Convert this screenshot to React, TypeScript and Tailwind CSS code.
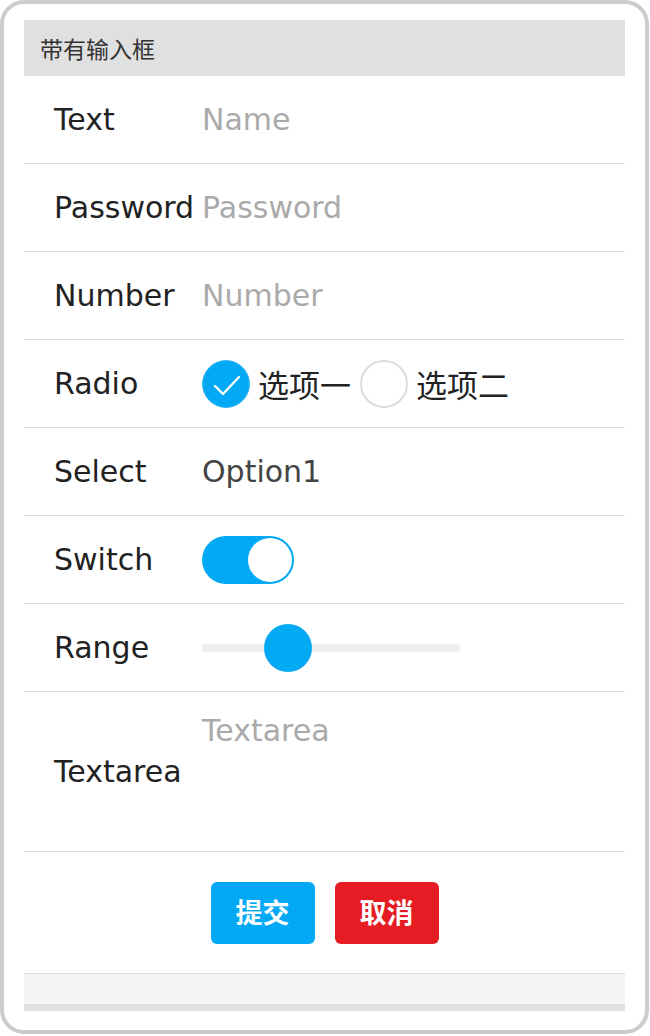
import React from "react";

const latin = "font-['DejaVu_Sans','Noto_Sans_CJK_SC',sans-serif]";

function Row({ label, children, tall }: { label: string; children: React.ReactNode; tall?: boolean }) {
  return (
    <div className={`flex items-center border-b border-[#dddddd] ${tall ? "h-[160px]" : "h-[88px]"}`}>
      <div className="w-[178px] shrink-0 pl-[30px] text-[30px] leading-none text-[#222222] whitespace-nowrap">{label}</div>
      <div className="flex-1 min-w-0 self-stretch flex items-center">{children}</div>
    </div>
  );
}

export default function App() {
  return (
    <div className={`w-[649px] h-[1034px] border-4 border-[#cccccc] rounded-[24px] bg-white pt-4 px-5 ${latin}`}>
      <div className="h-[56px] bg-[#e0e0e0] flex items-center pl-[16px] text-[23px] text-[#333333] font-['Noto_Sans_CJK_SC',sans-serif]">
        带有输入框
      </div>
      <Row label="Text">
        <span className="text-[30px] leading-none text-[#aaaaaa]">Name</span>
      </Row>
      <Row label="Password">
        <span className="text-[30px] leading-none text-[#aaaaaa]">Password</span>
      </Row>
      <Row label="Number">
        <span className="text-[30px] leading-none text-[#aaaaaa]">Number</span>
      </Row>
      <Row label="Radio">
        <div className="flex items-center">
          <div className="w-[48px] h-[48px] rounded-full bg-[#03a9f4] border border-[#3fb9f3] flex items-center justify-center">
            <svg width="46" height="46" viewBox="0 0 46 46" fill="none">
              <path d="M12 25 L20 33 L36 16" stroke="white" strokeWidth="2.4" strokeLinecap="round" strokeLinejoin="round" />
            </svg>
          </div>
          <span className="ml-[8px] text-[31px] leading-none text-[#222222] font-['Noto_Sans_CJK_SC',sans-serif]">选项一</span>
          <div className="ml-[9px] w-[48px] h-[48px] rounded-full border-2 border-[#dddddd] bg-white" />
          <span className="ml-[8px] text-[31px] leading-none text-[#222222] font-['Noto_Sans_CJK_SC',sans-serif]">选项二</span>
        </div>
      </Row>
      <Row label="Select">
        <span className="text-[30px] leading-none text-[#444444]">Option1</span>
      </Row>
      <Row label="Switch">
        <div className="w-[92px] h-[48px] rounded-full bg-[#03a9f4] flex items-center justify-end pr-[2px]">
          <div className="w-[44px] h-[44px] rounded-full bg-white" />
        </div>
      </Row>
      <Row label="Range">
        <div className="relative w-[258px] h-[8px] rounded-full bg-[#efefef]">
          <div className="absolute left-[62px] top-[-20px] w-[48px] h-[48px] rounded-full bg-[#03a9f4]" />
        </div>
      </Row>
      <Row label="Textarea" tall>
        <div className="self-stretch pt-[21px]">
          <span className="text-[30px] leading-[1.2] text-[#aaaaaa]">Textarea</span>
        </div>
      </Row>
      <div className="h-[121px] flex items-center justify-center gap-[20px] font-['Noto_Sans_CJK_SC',sans-serif]">
        <button className="w-[104px] h-[62px] rounded-[6px] bg-[#03a9f4] text-white text-[27px] font-semibold">提交</button>
        <button className="w-[104px] h-[62px] rounded-[6px] bg-[#e51c23] text-white text-[27px] font-semibold">取消</button>
      </div>
      <div className="h-[31px] border-t border-[#dddddd] bg-[#f4f4f4]" />
      <div className="h-[7px] bg-[#e0e0e0]" />
    </div>
  );
}
